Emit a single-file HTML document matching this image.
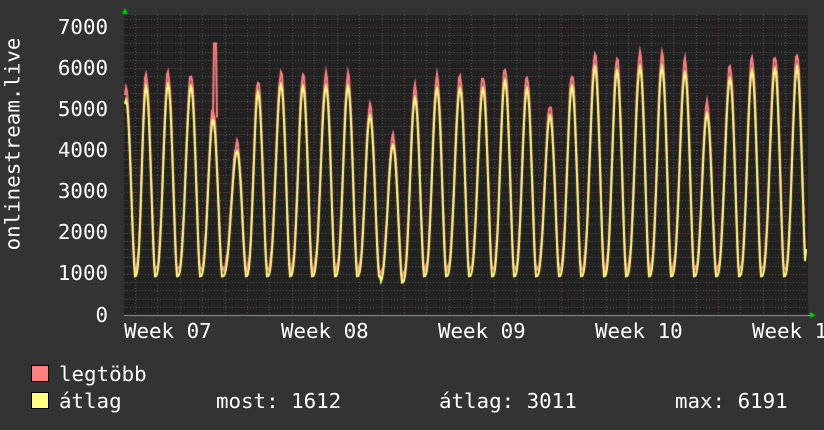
<!DOCTYPE html>
<html><head><meta charset="utf-8"><style>
body{margin:0;background:#333;width:824px;height:430px;overflow:hidden;position:relative;font-family:"DejaVu Sans Mono","Liberation Mono",monospace;color:#fff;font-size:20.8px}
canvas{position:absolute;left:0;top:0}
.t{position:absolute;white-space:pre;line-height:1}
.yl{position:absolute;right:716px;line-height:1}
.box{position:absolute;width:16px;height:15px;border:1px solid #000}
</style></head><body>
<canvas id="c" width="824" height="430"></canvas>
<div class="yl" style="top:17px">7000</div>
<div class="yl" style="top:58px">6000</div>
<div class="yl" style="top:99px">5000</div>
<div class="yl" style="top:140px">4000</div>
<div class="yl" style="top:181px">3000</div>
<div class="yl" style="top:222px">2000</div>
<div class="yl" style="top:263px">1000</div>
<div class="yl" style="top:305px">0</div>
<div class="t" style="left:-72px;top:155px;transform:rotate(-90deg);width:170px;text-align:center">onlinestream.live</div>
<div class="t" style="left:124px;top:321px">Week 07</div>
<div class="t" style="left:281px;top:321px">Week 08</div>
<div class="t" style="left:438px;top:321px">Week 09</div>
<div class="t" style="left:595px;top:321px">Week 10</div>
<div class="t" style="left:752px;top:321px">Week 11</div>
<div class="box" style="left:31px;top:365px;background:#ff7f7f"></div>
<div class="box" style="left:31px;top:392px;background:#ffff7f"></div>
<div class="t" style="left:59px;top:364px">legtöbb</div>
<div class="t" style="left:59px;top:391px">átlag</div>
<div class="t" style="left:216px;top:391px">most: 1612</div>
<div class="t" style="left:439px;top:391px">átlag: 3011</div>
<div class="t" style="left:675px;top:391px">max: 6191</div>
<script>
var c=document.getElementById('c').getContext('2d');
var X0=124,X1=808,Y0=15,Y1=315;
c.fillStyle='#222';c.fillRect(X0,Y0,X1-X0,Y1-Y0);
function y(v){return 315-v*0.04114;}
c.lineWidth=1;
function dl(x1,y1,x2,y2,col,dash){c.strokeStyle=col;c.setLineDash(dash);c.beginPath();c.moveTo(x1,y1);c.lineTo(x2,y2);c.stroke();}
for(var v=200;v<=7200;v+=200){var yy=Math.round(y(v))+0.5;if(yy<Y0)break;dl(X0,yy,X1,yy,v%1000==0?'#7a3a3a':'#555',[1,2]);}
for(var k=-6;k<30;k++){var xx=Math.round(247+k*22.43)+0.5;if(xx<=X0||xx>=X1)continue;var maj=((k%7)+7)%7==0;dl(xx,Y0,xx,Y1,maj?'#7a3a3a':'#555',[1,2]);}
c.setLineDash([]);
c.strokeStyle='#999';c.beginPath();c.moveTo(X0,Y1+0.5);c.lineTo(X1+2,Y1+0.5);c.stroke();
c.fillStyle='#0c0';c.beginPath();c.moveTo(810,312);c.lineTo(816,315);c.lineTo(810,318);c.fill();
c.beginPath();c.moveTo(122,14);c.lineTo(125,8);c.lineTo(128,14);c.fill();
var P=[[126,5500],[146,5850],[168,5900],[191,5850],[213,5000],[237,4200],[258,5700],[281,5900],[303,5850],[326,5850],[348,5850],[370,5100],[393,4350],[415,5550],[437,5800],[460,5800],[483,5800],[505,6000],[527,5800],[550,5100],[572,5850],[595,6350],[617,6250],[640,6350],[662,6350],[685,6200],[707,5150],[730,6050],[752,6250],[775,6300],[797,6350],[820,6000]];
function val(x,off,sc){
 var i=0;while(i<P.length-1&&P[i+1][0]<=x)i++;
 var a=P[i],b=P[i+1]||P[i];var tr=(x>380&&x<415)?850:1000;tr+=off;
 var d=x-a[0],L=b[0]-a[0];
 if(d<9){var t=d/9;var s=Math.pow(Math.cos(t*Math.PI/2),1.5);return tr+(a[1]*sc-tr)*s;}
 var t=(d-9)/(L-9);var s=Math.pow((1-Math.cos(t*Math.PI))/2,1.6);return tr+(b[1]*sc-tr)*s;
}
function draw(col,off,sc,jit){c.strokeStyle=col;c.lineWidth=2;c.beginPath();
 for(var x=X0+1;x<=806;x++){var v=val(x,off,sc)+(jit?Math.sin(x*1.7)*60:0);if(x==806)v=1600;var yy=y(v);if(x==X0+1)c.moveTo(x,yy);else c.lineTo(x,yy);}c.stroke();}
draw('#ff7f7f',100,1,true);
c.strokeStyle='#ff7f7f';c.beginPath();c.moveTo(213,y(4800));c.lineTo(214,y(6600));c.lineTo(216,y(6600));c.lineTo(217,y(4800));c.stroke();
draw('#ffff7f',-60,0.95,false);
</script>
</body></html>
